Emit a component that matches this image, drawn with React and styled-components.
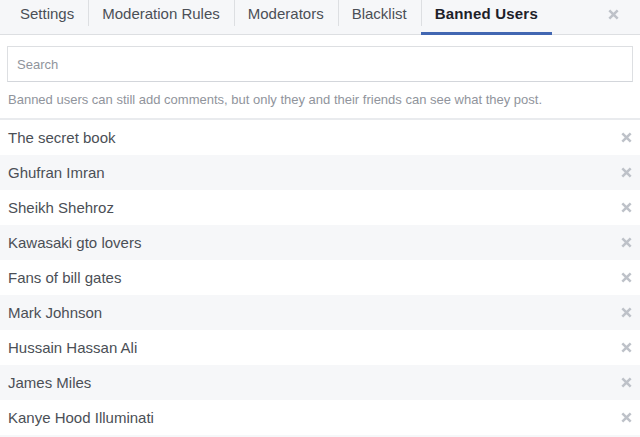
import React from "react";
import styled, { createGlobalStyle } from "styled-components";

const Global = createGlobalStyle`
  html, body { margin: 0; padding: 0; background: #fff; }
  body { font-family: "Liberation Sans", Arial, Helvetica, sans-serif; }
  * { box-sizing: border-box; }
`;

const Page = styled.div`
  width: 640px;
  height: 437px;
  overflow: hidden;
  background: #fff;
`;

const TabBar = styled.div`
  display: flex;
  align-items: stretch;
  height: 35px;
  padding-left: 6px;
  background: #f6f7f9;
  border-bottom: 1px solid #dddfe2;
`;

const Tab = styled.div`
  position: relative;
  display: flex;
  align-items: center;
  padding: 0 14px 6px;
  font-size: 15px;
  letter-spacing: ${(p) => (p.$active ? "0.2px" : "0")};
  color: ${(p) => (p.$active ? "#1d2129" : "#4b4f56")};
  font-weight: ${(p) => (p.$active ? "bold" : "normal")};
  white-space: nowrap;
  margin-bottom: -1px;
  border-bottom: 3px solid ${(p) => (p.$active ? "#4267b2" : "transparent")};
  &:not(:first-child)::before {
    content: "";
    position: absolute;
    left: 0;
    top: 0;
    height: 26px;
    width: 1px;
    background: #dddfe2;
  }
`;

const HeaderClose = styled.button`
  margin-left: auto;
  margin-right: 21px;
  align-self: center;
  margin-top: -5px;
  border: 0;
  background: none;
  padding: 0;
  display: flex;
  cursor: pointer;
`;

const Body = styled.div`
  padding: 11px 7px 0;
`;

const SearchInput = styled.input`
  display: block;
  width: 100%;
  height: 36px;
  border: 1px solid #dddfe2;
  border-bottom-color: #d3d6db;
  padding: 0 9px;
  font-family: inherit;
  font-size: 13px;
  color: #1d2129;
  outline: none;
  &::placeholder { color: #90949c; }
`;

const Help = styled.p`
  margin: 0;
  padding: 10px 8px 10px;
  font-size: 13px;
  line-height: 16px;
  color: #90949c;
`;

const List = styled.ul`
  list-style: none;
  margin: 0;
  padding: 0;
  border-top: 2px solid #e9ebee;
`;

const Row = styled.li`
  display: flex;
  align-items: center;
  height: 35px;
  padding: 0 8px;
  font-size: 15px;
  color: #4b4f56;
  background: ${(p) => (p.$alt ? "#f6f7f9" : "#fff")};
`;

const Name = styled.span`
  flex: 1;
`;

const RemoveButton = styled.button`
  border: 0;
  background: none;
  padding: 0;
  display: flex;
  margin-top: -1px;
  cursor: pointer;
`;

const Cross = ({ size = 11 }) => (
  <svg width={size} height={size} viewBox="0 0 10 10">
    <path d="M1.2 1.2 L8.8 8.8 M8.8 1.2 L1.2 8.8" stroke="#bec2c9" strokeWidth="2.3" strokeLinecap="butt" />
  </svg>
);

const tabs = ["Settings", "Moderation Rules", "Moderators", "Blacklist", "Banned Users"];
const users = [
  "The secret book",
  "Ghufran Imran",
  "Sheikh Shehroz",
  "Kawasaki gto lovers",
  "Fans of bill gates",
  "Mark Johnson",
  "Hussain Hassan Ali",
  "James Miles",
  "Kanye Hood Illuminati",
];

export default function App() {
  return (
    <Page>
      <Global />
      <TabBar>
        {tabs.map((t) => (
          <Tab key={t} $active={t === "Banned Users"}>{t}</Tab>
        ))}
        <HeaderClose aria-label="Close"><Cross size={11} /></HeaderClose>
      </TabBar>
      <Body>
        <SearchInput placeholder="Search" />
      </Body>
      <Help>
        Banned users can still add comments, but only they and their friends can see what they post.
      </Help>
      <List>
        {users.map((u, i) => (
          <Row key={u} $alt={i % 2 === 1}>
            <Name>{u}</Name>
            <RemoveButton aria-label={`Unban ${u}`}><Cross /></RemoveButton>
          </Row>
        ))}
        <Row $alt />
      </List>
    </Page>
  );
}
